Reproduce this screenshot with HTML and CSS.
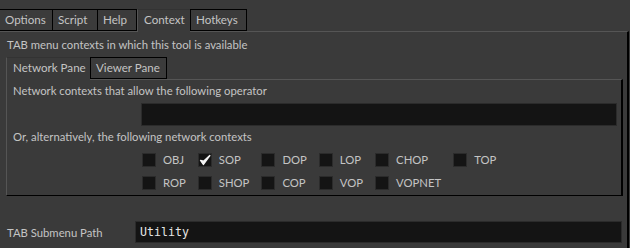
FILE: index.html
```html
<!DOCTYPE html>
<html lang="en">

<head>
    <meta charset="UTF-8">
    <title>Tool Context</title>
    <link rel="stylesheet" href="styles.css">
</head>

<body>
    <div class="window">
        <div class="tabs">
            <div class="tab">Options</div>
            <div class="tab">Script</div>
            <div class="tab">Help</div>
            <div class="tab active">Context</div>
            <div class="tab">Hotkeys</div>
        </div>

        <div class="panel">
            <div class="caption">TAB menu contexts in which this tool is available</div>

            <div class="subtabs">
                <div class="tab active">Network Pane</div>
                <div class="tab">Viewer Pane</div>
            </div>

            <div class="subpanel">
                <div class="line">Network contexts that allow the following operator</div>
                <div class="field op-field"></div>
                <div class="line">Or, alternatively, the following network contexts</div>

                <div class="checks">
                    <label class="check"><span class="box"></span>OBJ</label>
                    <label class="check"><span class="box"><svg viewBox="0 0 12 12" width="12" height="12"><path d="M1.6 6.4 L4.4 10.4 L10.8 1.6 L4.6 7.2 Z" fill="#f4f4f4" stroke="#f4f4f4" stroke-width="1.5" stroke-linejoin="round"/></svg></span>SOP</label>
                    <label class="check"><span class="box"></span>DOP</label>
                    <label class="check"><span class="box"></span>LOP</label>
                    <label class="check"><span class="box"></span>CHOP</label>
                    <label class="check"><span class="box"></span>TOP</label>
                    <label class="check"><span class="box"></span>ROP</label>
                    <label class="check"><span class="box"></span>SHOP</label>
                    <label class="check"><span class="box"></span>COP</label>
                    <label class="check"><span class="box"></span>VOP</label>
                    <label class="check"><span class="box"></span>VOPNET</label>
                </div>
            </div>

            <div class="path-row">
                <span class="path-label">TAB Submenu Path</span>
                <div class="field path-field">Utility</div>
            </div>
        </div>
    </div>
</body>

</html>
```

FILE: styles.css
```css
* {
    margin: 0;
    padding: 0;
    box-sizing: border-box;
}

body {
    background-color: #3a3a3a;
    color: #c4c4c4;
    font-family: Lato, "Noto Sans", sans-serif;
    font-size: 11.3px;
    overflow: hidden;
}

.window {
    width: 630px;
    height: 248px;
}

/* tab strips */
.tabs,
.subtabs {
    display: flex;
    height: 22px;
}

.tabs {
    margin-top: 9px;
}

.tab {
    height: 22px;
    line-height: 20px;
    padding: 0 5px;
    white-space: nowrap;
    border: 1px solid #000;
    border-left: none;
    background-color: #3b3b3b;
    color: #c4c4c4;
    font-size: 11.6px;
}

.tab.active {
    border: none;
    border-left: 1px solid #555;
    border-top: 1px solid #333;
    height: 23px;
    position: relative;
    z-index: 1;
    padding: 0 6px;
    background-color: #3a3a3a;
}

.tab.active + .tab {
    border-left: 1px solid #000;
}

.tabs .tab:nth-child(1) { width: 53px; }
.tabs .tab:nth-child(2) { width: 45px; }
.tabs .tab:nth-child(3) { width: 39px; }
.tabs .tab:nth-child(4) { width: 53px; }
.tabs .tab:nth-child(5) { width: 57px; }

.subtabs .tab:nth-child(1) { width: 84px; }
.subtabs .tab:nth-child(2) { width: 77px; }

/* main panel */
.panel {
    border-top: 1px solid #555;
    border-right: 2px solid #000;
    margin-right: 1px;
    padding-left: 6px;
    height: 217px;
}

.caption {
    line-height: 16px;
    margin-top: 5px;
    padding-left: 1px;
}

.subtabs {
    margin-top: 4px;
}

.subpanel {
    border-top: 1px solid #555;
    border-left: 1px solid #555;
    border-right: 2px solid #000;
    border-bottom: 1px solid #000;
    margin-right: 4px;
    padding: 3px 4px 5px 6px;
}

.line {
    line-height: 16px;
}

.field {
    background-color: #141414;
    border: 1px solid #2b2b2b;
}

.op-field {
    height: 23px;
    margin: 4px 0 3px 128px;
}

/* context checkboxes */
.checks {
    display: grid;
    grid-template-columns: repeat(6, auto);
    justify-content: start;
    column-gap: 12px;
    row-gap: 9px;
    margin: 8px 0 0 129px;
}

.check {
    display: flex;
    align-items: center;
    gap: 7px;
    height: 14px;
    line-height: 14px;
}

.box {
    width: 14px;
    height: 14px;
    background-color: #141414;
    border: 1px solid #2b2b2b;
    display: flex;
    align-items: center;
    justify-content: center;
}

/* submenu path */
.path-row {
    display: flex;
    align-items: center;
    margin-top: 25px;
}

.path-label {
    width: 129px;
    padding-left: 1px;
}

.path-field {
    flex: 1;
    height: 22px;
    margin-right: 5px;
    padding-left: 4px;
    line-height: 20px;
    font-family: "DejaVu Sans Mono", monospace;
    font-size: 11.6px;
    color: #e6e6e6;
}
```
